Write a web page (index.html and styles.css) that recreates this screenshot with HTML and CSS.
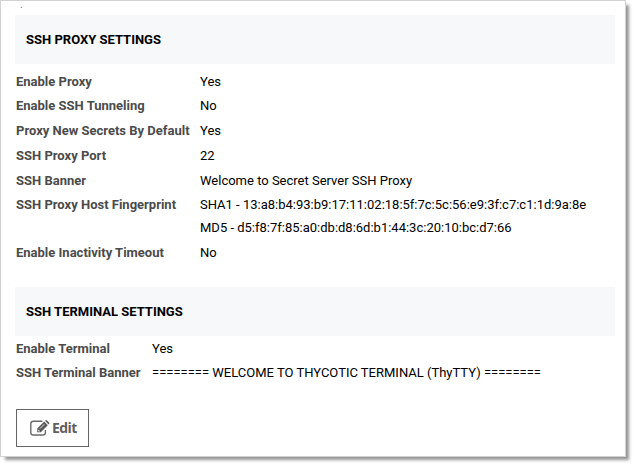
FILE: index.html
```html
<!DOCTYPE html>
<html lang="en">
<head>
<meta charset="utf-8">
<title>SSH Proxy Settings</title>
<link rel="stylesheet" href="styles.css">
</head>
<body>
<main class="card">
  <div class="lead">.</div>
  <h2 class="heading">SSH PROXY SETTINGS</h2>
  <dl class="settings proxy">
    <dt>Enable Proxy</dt><dd>Yes</dd>
    <dt>Enable SSH Tunneling</dt><dd>No</dd>
    <dt>Proxy New Secrets By Default</dt><dd>Yes</dd>
    <dt>SSH Proxy Port</dt><dd>22</dd>
    <dt>SSH Banner</dt><dd>Welcome to Secret Server SSH Proxy</dd>
    <dt>SSH Proxy Host Fingerprint</dt><dd>SHA1 - 13:a8:b4:93:b9:17:11:02:18:5f:7c:5c:56:e9:3f:c7:c1:1d:9a:8e<br>MD5 - d5:f8:7f:85:a0:db:d8:6d:b1:44:3c:20:10:bc:d7:66</dd>
    <dt>Enable Inactivity Timeout</dt><dd>No</dd>
  </dl>
  <h2 class="heading">SSH TERMINAL SETTINGS</h2>
  <dl class="settings terminal">
    <dt>Enable Terminal</dt><dd>Yes</dd>
    <dt>SSH Terminal Banner</dt><dd>======== WELCOME TO THYCOTIC TERMINAL (ThyTTY) ========</dd>
  </dl>
  <button class="edit" type="button">
    <svg class="icon" viewBox="0 0 20 16" aria-hidden="true">
      <path d="M12.500 1.200H3.400Q.8 1.200.8 3.800v8.600q0 2.600 2.600 2.600h9.400q2.600 0 2.600-2.600V10" fill="none" stroke="#6a6a6a" stroke-width="1.400"/>
      <path d="M7.200 12.200V8.600l7-7 3.600 3.600-7 7zM15 .8l.4-.4q.8-.8 1.600 0L19 2.400q.8.8 0 1.600l-.4.4z" fill="#5a5a5a"/>
      <path d="M10 8.500l4.300-4.300M8.200 9.600v1.100h1.100v1" fill="none" stroke="#fff" stroke-width=".8"/>
    </svg>
    <span>Edit</span>
  </button>
</main>
</body>
</html>
```
FILE: styles.css
```css
* { box-sizing: border-box; }
html { height: 100%; }
body {
  height: 465px;
  margin: 0;
  background: #fff;
  color: #000;
  font: 13px/23px Roboto, sans-serif;
}
.card {
  width: 626px;
  height: 457px;
  padding: 0 10px 0 14px;
  border: 1px solid #d2d2d2;
  box-shadow: 4px 4px 3px -1px rgba(0, 0, 0, .42);
}
.lead {
  height: 14px;
  padding-left: 5px;
  line-height: 8px;
  font-size: 10px;
  color: #2787c8;
}
.heading {
  height: 49px;
  margin: 0;
  padding-left: 11px;
  background: #f6f8fa;
  font-size: 13px;
  font-weight: 700;
  line-height: 49px;
}
.settings {
  display: grid;
  margin: 0;
  padding-left: 1px;
}
.proxy {
  grid-template-columns: 184px 1fr;
  grid-template-rows: 24px 25px 25px 25px 24px 48px 24px;
  height: 223px;
  padding-top: 6px;
}
.terminal {
  grid-template-columns: 136px 1fr;
  grid-template-rows: 24px 24px;
  height: 73px;
  padding-top: 1px;
}
dt { color: #4b4b4b; font-weight: 700; white-space: nowrap; }
dd { margin: 0; white-space: nowrap; }
.edit {
  display: flex;
  align-items: center;
  gap: 2px;
  width: 73px;
  height: 38px;
  margin: 0 0 0 1px;
  padding: 0 0 0 13px;
  border: 1px solid #666;
  background: #fff;
  color: #606060;
  font: 700 14px/20px "Open Sans", sans-serif;
  letter-spacing: -.6px;
}
.icon { width: 20px; height: 16px; }
```
